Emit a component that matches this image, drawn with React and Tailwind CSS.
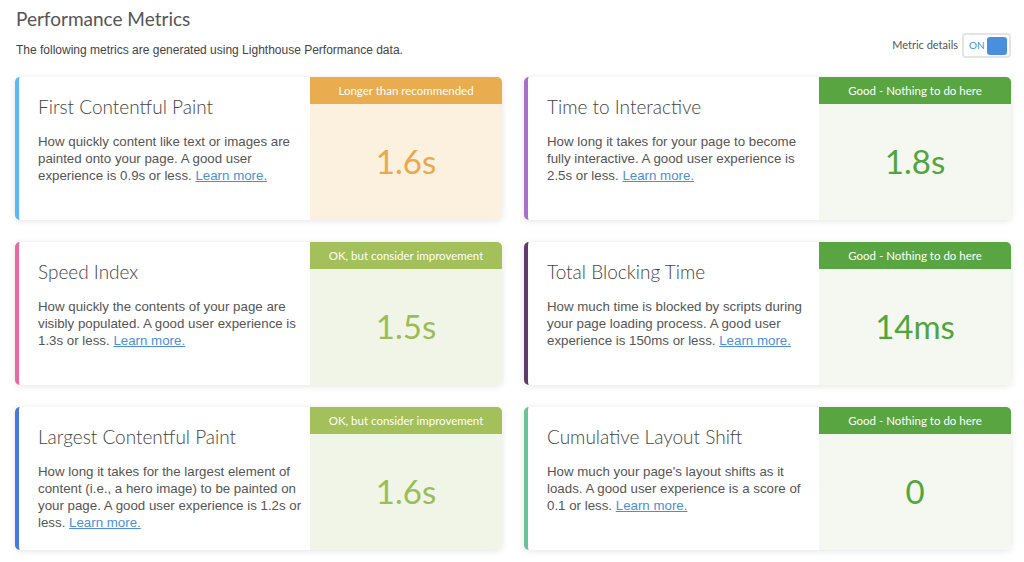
const metrics = [
  {
    title: "First Contentful Paint",
    text: "How quickly content like text or images are painted onto your page. A good user experience is 0.9s or less.",
    value: "1.6s",
    status: "orange",
    edge: "border-l-[#5ab8f2]",
  },
  {
    title: "Time to Interactive",
    text: "How long it takes for your page to become fully interactive. A good user experience is 2.5s or less.",
    value: "1.8s",
    status: "green",
    edge: "border-l-[#a970c9]",
  },
  {
    title: "Speed Index",
    text: "How quickly the contents of your page are visibly populated. A good user experience is 1.3s or less.",
    value: "1.5s",
    status: "lime",
    edge: "border-l-[#e86aa0]",
  },
  {
    title: "Total Blocking Time",
    text: "How much time is blocked by scripts during your page loading process. A good user experience is 150ms or less.",
    value: "14ms",
    status: "green",
    edge: "border-l-[#5e3d6e]",
  },
  {
    title: "Largest Contentful Paint",
    text: "How long it takes for the largest element of content (i.e., a hero image) to be painted on your page. A good user experience is 1.2s or less.",
    value: "1.6s",
    status: "lime",
    edge: "border-l-[#4679de]",
  },
  {
    title: "Cumulative Layout Shift",
    text: "How much your page's layout shifts as it loads. A good user experience is a score of 0.1 or less.",
    value: "0",
    status: "green",
    edge: "border-l-[#69c29a]",
  },
];

const statuses = {
  orange: {
    label: "Longer than recommended",
    badge: "bg-[#e9ac4f]",
    panel: "bg-[#fcf0df]",
    value: "text-[#eaa94c]",
  },
  green: {
    label: "Good - Nothing to do here",
    badge: "bg-[#58a541]",
    panel: "bg-[#f4f8f1]",
    value: "text-[#52a53b]",
  },
  lime: {
    label: "OK, but consider improvement",
    badge: "bg-[#a3c05a]",
    panel: "bg-[#f1f5e8]",
    value: "text-[#9abe55]",
  },
};

const display = { fontFamily: "Lato, 'Noto Sans', sans-serif" };
const body = { fontFamily: "'Liberation Sans', Arial, sans-serif" };

const MetricCard = ({ m }) => {
  const s = statuses[m.status];
  return (
    <div
      className={`flex h-[143px] bg-white rounded-[5px] border-l-4 ${m.edge} shadow-[0_1px_7px_rgba(0,0,0,0.11)] overflow-hidden`}
    >
      {/* Description */}
      <div className="w-[291px] shrink-0 pl-[19px] pt-[18px]">
        <h3
          className="text-[19px] leading-[24px] font-light text-[#444]"
          style={display}
        >
          {m.title}
        </h3>
        <p
          className="mt-[14px] max-w-[268px] text-[13.3px] leading-[17px] text-[#555]"
          style={body}
        >
          {m.text}{" "}
          <a href="#" className="text-[#4a90d9] underline">
            Learn more.
          </a>
        </p>
      </div>

      {/* Score */}
      <div className={`flex-1 flex flex-col ${s.panel}`}>
        <div
          className={`h-[27px] flex items-center justify-center text-[11.5px] text-white ${s.badge}`}
          style={display}
        >
          {s.label}
        </div>
        <div
          className={`flex-1 flex items-center justify-center text-[33px] ${s.value}`}
          style={display}
        >
          {m.value}
        </div>
      </div>
    </div>
  );
};

const App = () => {
  return (
    <div className="w-[1024px] h-[562px] bg-white overflow-hidden pl-[15px] pr-[13px]">
      {/* Header */}
      <div className="flex items-end justify-between">
        <div className="pl-[1px]">
          <h1
            className="pt-[7px] text-[19px] leading-[24px] text-[#555]"
            style={display}
          >
            Performance Metrics
          </h1>
          <p
            className="mt-[12px] text-[12px] leading-[15px] text-[#444]"
            style={body}
          >
            The following metrics are generated using Lighthouse Performance
            data.
          </p>
        </div>
        <div className="flex items-center gap-[4px]">
          <span className="text-[11px] text-[#555]" style={display}>
            Metric details
          </span>
          <div className="flex items-center h-[25px] w-[49px] pl-[5px] pr-[2px] border-2 border-[#e4e4e4] rounded-[4px] bg-white">
            <span className="text-[10px] text-[#4a90d9]" style={display}>
              ON
            </span>
            <span className="ml-auto w-[20px] h-[18px] rounded-[3px] bg-[#4a8fdb]"></span>
          </div>
        </div>
      </div>

      {/* Cards */}
      <div className="mt-[19px] grid grid-cols-2 gap-x-[22px] gap-y-[22px]">
        {metrics.map((m) => (
          <MetricCard key={m.title} m={m} />
        ))}
      </div>
    </div>
  );
};

export default App;
